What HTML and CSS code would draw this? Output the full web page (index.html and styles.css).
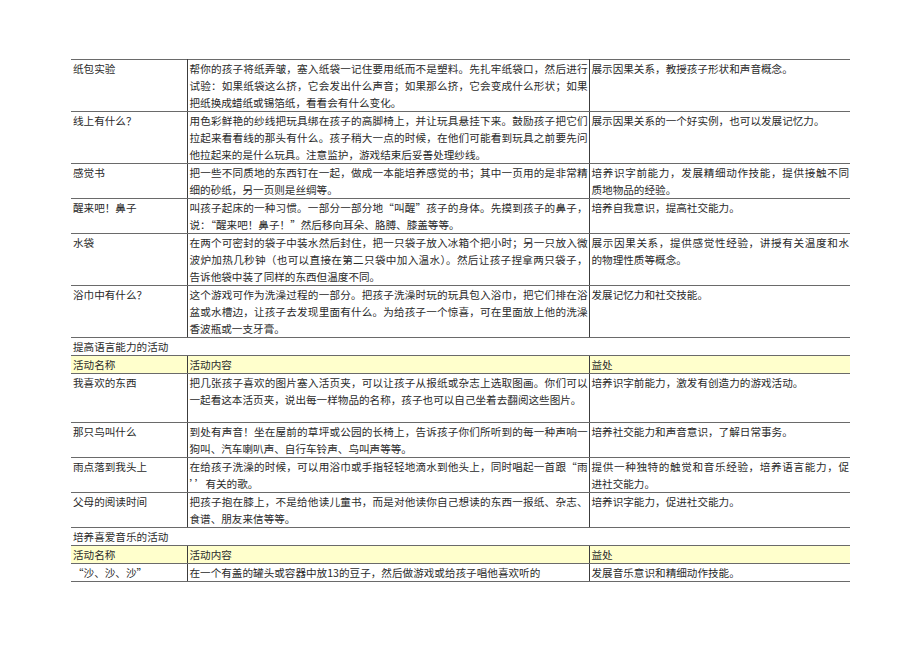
FILE: index.html
```html
<!DOCTYPE html>
<html lang="zh-CN">
<head>
<meta charset="utf-8">
<title>活动表</title>
<link rel="stylesheet" href="styles.css">
</head>
<body>
<div class="page">
<table class="acts">
<colgroup><col class="c1"><col class="c2"><col class="c3"></colgroup>
<tbody>
<tr>
<td>纸包实验</td>
<td><span class="ln">帮你的孩子将纸弄皱，塞入纸袋一记住要用纸而不是塑料。先扎牢纸袋口，然后进行</span><span class="ln">试验：如果纸袋这么挤，它会发出什么声音；如果那么挤，它会变成什么形状；如果</span><span class="end">把纸换成蜡纸或锡箔纸，看看会有什么变化。</span></td>
<td>展示因果关系，教授孩子形状和声音概念。</td>
</tr>
<tr>
<td>线上有什么？</td>
<td><span class="ln">用色彩鲜艳的纱线把玩具绑在孩子的高脚椅上，并让玩具悬挂下来。鼓励孩子把它们</span><span class="ln">拉起来看看线的那头有什么。孩子稍大一点的时候，在他们可能看到玩具之前要先问</span><span class="end">他拉起来的是什么玩具。注意监护，游戏结束后妥善处理纱线。</span></td>
<td>展示因果关系的一个好实例，也可以发展记忆力。</td>
</tr>
<tr>
<td>感觉书</td>
<td><span class="ln">把一些不同质地的东西钉在一起，做成一本能培养感觉的书；其中一页用的是非常精</span><span class="end">细的砂纸，另一页则是丝绸等。</span></td>
<td><span class="ln">培养识字前能力，发展精细动作技能，提供接触不同</span><span class="end">质地物品的经验。</span></td>
</tr>
<tr>
<td>醒来吧！鼻子</td>
<td><span class="ln">叫孩子起床的一种习惯。一部分一部分地“叫醒”孩子的身体。先摸到孩子的鼻子，</span><span class="end">说：“醒来吧！鼻子！”然后移向耳朵、胳膊、膝盖等等。</span></td>
<td>培养自我意识，提高社交能力。</td>
</tr>
<tr>
<td>水袋</td>
<td><span class="ln">在两个可密封的袋子中装水然后封住，把一只袋子放入冰箱个把小时；另一只放入微</span><span class="ln">波炉加热几秒钟（也可以直接在第二只袋中加入温水）。然后让孩子捏拿两只袋子，</span><span class="end">告诉他袋中装了同样的东西但温度不同。</span></td>
<td><span class="ln">展示因果关系，提供感觉性经验，讲授有关温度和水</span><span class="end">的物理性质等概念。</span></td>
</tr>
<tr>
<td>浴巾中有什么？</td>
<td><span class="ln">这个游戏可作为洗澡过程的一部分。把孩子洗澡时玩的玩具包入浴巾，把它们排在浴</span><span class="ln">盆或水槽边，让孩子去发现里面有什么。为给孩子一个惊喜，可在里面放上他的洗澡</span><span class="end">香波瓶或一支牙膏。</span></td>
<td>发展记忆力和社交技能。</td>
</tr>
<tr class="section">
<td colspan="3">提高语言能力的活动</td>
</tr>
<tr class="head">
<td>活动名称</td>
<td>活动内容</td>
<td>益处</td>
</tr>
<tr class="tall">
<td>我喜欢的东西</td>
<td><span class="ln">把几张孩子喜欢的图片塞入活页夹，可以让孩子从报纸或杂志上选取图画。你们可以</span><span class="end">一起看这本活页夹，说出每一样物品的名称，孩子也可以自己坐着去翻阅这些图片。</span></td>
<td>培养识字前能力，激发有创造力的游戏活动。</td>
</tr>
<tr>
<td>那只鸟叫什么</td>
<td><span class="ln">到处有声音！坐在屋前的草坪或公园的长椅上，告诉孩子你们所听到的每一种声响一</span><span class="end">狗叫、汽车喇叭声、自行车铃声、鸟叫声等等。</span></td>
<td>培养社交能力和声音意识，了解日常事务。</td>
</tr>
<tr>
<td>雨点落到我头上</td>
<td><span class="ln">在给孩子洗澡的时候，可以用浴巾或手指轻轻地滴水到他头上，同时唱起一首跟“雨</span><span class="end">’’有关的歌。</span></td>
<td><span class="ln">提供一种独特的触觉和音乐经验，培养语言能力，促</span><span class="end">进社交能力。</span></td>
</tr>
<tr>
<td>父母的阅读时间</td>
<td><span class="ln">把孩子抱在膝上，不是给他读儿童书，而是对他读你自己想读的东西一报纸、杂志、</span><span class="end">食谱、朋友来信等等。</span></td>
<td>培养识字能力，促进社交能力。</td>
</tr>
<tr class="section">
<td colspan="3">培养喜爱音乐的活动</td>
</tr>
<tr class="head">
<td>活动名称</td>
<td>活动内容</td>
<td>益处</td>
</tr>
<tr>
<td>“沙、沙、沙”</td>
<td>在一个有盖的罐头或容器中放13的豆子，然后做游戏或给孩子唱他喜欢听的</td>
<td>发展音乐意识和精细动作技能。</td>
</tr>
</tbody>
</table>
</div>
</body>
</html>
```

FILE: styles.css
```css
html, body {
  margin: 0;
  padding: 0;
  background: #ffffff;
}

.page {
  padding: 59px 0 0 71px;
  font-family: "Noto Sans CJK SC", "Noto Sans", sans-serif;
  font-size: 10.6px;
  line-height: 17px;
  color: #2a2a2a;
}

.acts {
  width: 779px;
  table-layout: fixed;
  border-collapse: collapse;
  border-top: 1px solid #6a6a6a;
}

.c1 { width: 116px; }
.c2 { width: 402px; }
.c3 { width: 261px; }

.acts td {
  vertical-align: top;
  padding: 0 1px 0 2px;
  border-bottom: 1px solid #6a6a6a;
  text-align: left;
}

.acts td + td {
  border-left: 1px solid #3c3c3c;
}

.ln {
  display: block;
  text-align: justify;
  text-align-last: justify;
  white-space: nowrap;
}

.end {
  display: block;
  white-space: nowrap;
}

.acts .section td {
  border-left: none;
  height: 17px;
}

.acts .head td {
  background: #ffffcc;
}

.acts .tall td {
  height: 48px;
}
```
